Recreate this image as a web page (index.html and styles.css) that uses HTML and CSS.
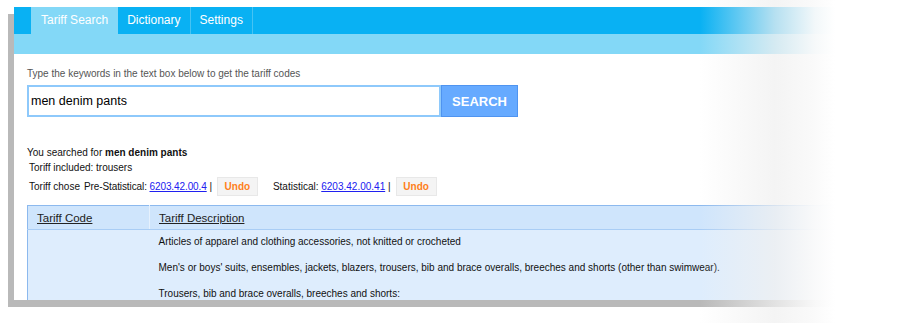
FILE: index.html
```html
<!DOCTYPE html>
<html lang="en">
<head>
  <meta charset="UTF-8">
  <title>Tariff Search</title>
  <link rel="stylesheet" href="styles.css">
</head>
<body>
  <div class="page">
    <div class="nav">
      <a href="#" class="active">Tariff Search</a>
      <a href="#">Dictionary</a>
      <a href="#">Settings</a>
    </div>
    <div class="subbar"></div>

    <div class="content">
      <p class="hint">Type the keywords in the text box below to get the tariff codes</p>
      <form class="search-row">
        <input type="text" class="search-input" value="men denim pants">
        <button type="button" class="search-btn">SEARCH</button>
      </form>

      <div class="summary">
        <div class="line">You searched for <b>men denim pants</b></div>
        <div class="line indent">Toriff included: trousers</div>
        <div class="line indent chose">
          <span>Toriff chose</span>
          <span class="gap">Pre-Statistical: <a href="#">6203.42.00.4</a> |</span>
          <button type="button" class="undo-btn">Undo</button>
          <span class="gap-lg">Statistical: <a href="#">6203.42.00.41</a> |</span>
          <button type="button" class="undo-btn">Undo</button>
        </div>
      </div>

      <table class="tariff-table">
        <thead>
          <tr>
            <th class="col-code"><a href="#">Tariff Code</a></th>
            <th><a href="#">Tariff Description</a></th>
          </tr>
        </thead>
        <tbody>
          <tr>
            <td class="col-code"></td>
            <td>
              <p>Articles of apparel and clothing accessories, not knitted or crocheted</p>
              <p>Men's or boys' suits, ensembles, jackets, blazers, trousers, bib and brace overalls, breeches and shorts (other than swimwear).</p>
              <p>Trousers, bib and brace overalls, breeches and shorts:</p>
            </td>
          </tr>
        </tbody>
      </table>
    </div>
  </div>
  <div class="fade"></div>
</body>
</html>
```

FILE: styles.css
```css
body {
  margin: 0;
  background: #fff;
  font-family: "Liberation Sans", Arial, sans-serif;
  width: 919px;
  height: 323px;
  overflow: hidden;
  position: relative;
}
.page {
  margin: 7px 0 0 14px;
  width: 870px;
  height: 293px;
  background: #fff;
  box-shadow: -6px 7px 0 #b9b9b9;
  overflow: hidden;
}
.nav {
  display: flex;
  height: 27px;
  padding-left: 17px;
  background: #09b1f3;
}
.nav a {
  display: block;
  padding: 0 9px;
  line-height: 27px;
  font-size: 12px;
  color: #fff;
  text-decoration: none;
  border-right: 1px solid #45c3f3;
}
.nav a.active {
  padding: 0 10px;
  background: #83d8f7;
  border-right: none;
}
.subbar {
  height: 20px;
  background: #83d8f7;
}
.content {
  padding: 14px 0 0 13px;
}
.hint {
  margin: 0;
  font-size: 10px;
  line-height: 12px;
  color: #555;
}
.search-row {
  display: flex;
  margin: 5px 0 0 0;
}
.search-input {
  width: 414px;
  height: 32px;
  box-sizing: border-box;
  border: 2px solid #8ec9fb;
  padding: 0 2px;
  font-family: "Liberation Sans", Arial, sans-serif;
  font-size: 12.5px;
  color: #000;
  outline: none;
}
.search-btn {
  width: 77px;
  height: 32px;
  box-sizing: border-box;
  background: #66aaff;
  border: 1px solid #4f94f0;
  color: #fff;
  font-family: "Liberation Sans", Arial, sans-serif;
  font-size: 13px;
  font-weight: bold;
  cursor: pointer;
}
.summary {
  margin-top: 28px;
  font-size: 10px;
  color: #111;
}
.summary .line {
  line-height: 15px;
}
.summary .indent {
  padding-left: 2px;
}
.summary .chose {
  display: flex;
  align-items: center;
  margin-top: 2px;
}
.summary a {
  color: #2020f0;
}
.gap {
  margin-left: 4px;
  letter-spacing: -0.1px;
}
.gap-lg {
  margin-left: 15px;
}
.undo-btn {
  margin-left: 5px;
  width: 41px;
  height: 19px;
  background: #f4f4f4;
  border: 1px solid #e8e8e8;
  color: #ff7f1a;
  font-family: "Liberation Sans", Arial, sans-serif;
  font-size: 10px;
  font-weight: bold;
  padding: 0;
}
.tariff-table {
  margin-top: 9px;
  width: 830px;
  border-collapse: collapse;
  border-top: 1px solid #8cb9ee;
  border-left: 1px solid #8cb9ee;
}
.tariff-table th {
  height: 23px;
  background: #cfe5fc;
  text-align: left;
  font-weight: normal;
  font-size: 11.5px;
  padding: 0 0 0 9px;
  border-bottom: 1px solid #a9cdf5;
}
.tariff-table th.col-code {
  width: 112px;
  border-right: 1px solid #e6f1fd;
}
.tariff-table th a {
  color: #222;
}
.tariff-table td {
  background: #deedfd;
  vertical-align: top;
  padding: 0 0 0 9px;
  font-size: 10px;
  color: #111;
}
.tariff-table td p {
  margin: 6px 0 14px 0;
  line-height: 12px;
}
.fade {
  position: absolute;
  top: 0;
  left: 700px;
  width: 219px;
  height: 323px;
  background: linear-gradient(to right, rgba(242, 242, 242, 0) 0px, rgba(240, 240, 240, 0.75) 75px, rgba(250, 250, 250, 0.97) 115px, #fff 135px);
}
```
